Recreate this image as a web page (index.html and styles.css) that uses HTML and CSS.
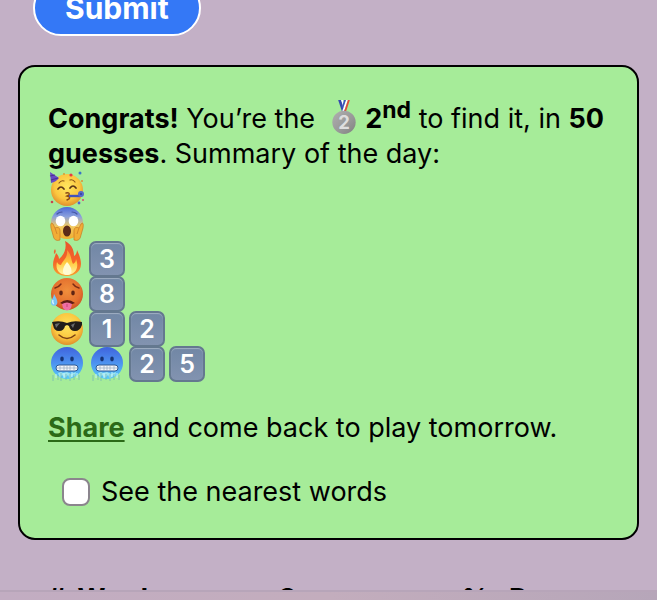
FILE: index.html
```html
<!DOCTYPE html>
<html lang="en">
<head>
    <meta charset="UTF-8">
    <meta name="viewport" content="width=device-width, initial-scale=1.0">
    <title>Word of the day</title>
    <link rel="stylesheet" href="styles.css">
</head>
<body>

    <!-- Emoji shapes, reused below -->
    <svg class="defs" aria-hidden="true">
        <defs>
            <radialGradient id="yellow" cx="50%" cy="40%" r="60%">
                <stop offset="0" stop-color="#ffe65f"/>
                <stop offset="0.65" stop-color="#fbc740"/>
                <stop offset="1" stop-color="#e08f2c"/>
            </radialGradient>
            <radialGradient id="orange" cx="50%" cy="40%" r="60%">
                <stop offset="0" stop-color="#f08f3c"/>
                <stop offset="0.7" stop-color="#e4702e"/>
                <stop offset="1" stop-color="#c95224"/>
            </radialGradient>
            <linearGradient id="scare" x1="0" y1="0" x2="0" y2="1">
                <stop offset="0" stop-color="#4a69d8"/>
                <stop offset="0.3" stop-color="#8ba1dc"/>
                <stop offset="0.6" stop-color="#f2ca62"/>
                <stop offset="1" stop-color="#f0ae2e"/>
            </linearGradient>
            <linearGradient id="ice" x1="0" y1="0" x2="0" y2="1">
                <stop offset="0" stop-color="#3f63dd"/>
                <stop offset="0.5" stop-color="#4d92f0"/>
                <stop offset="1" stop-color="#58cdf8"/>
            </linearGradient>
            <linearGradient id="flame" x1="0" y1="0" x2="0" y2="1">
                <stop offset="0" stop-color="#e9532b"/>
                <stop offset="0.6" stop-color="#f4652a"/>
                <stop offset="1" stop-color="#f9a02c"/>
            </linearGradient>
            <linearGradient id="flame-in" x1="0" y1="0" x2="0" y2="1">
                <stop offset="0" stop-color="#fb8a35"/>
                <stop offset="0.5" stop-color="#ffcb3f"/>
                <stop offset="1" stop-color="#fff6a8"/>
            </linearGradient>
            <linearGradient id="silver" x1="0" y1="0" x2="1" y2="1">
                <stop offset="0" stop-color="#b0b0b0"/>
                <stop offset="0.6" stop-color="#979797"/>
                <stop offset="1" stop-color="#808080"/>
            </linearGradient>

            <symbol id="party" viewBox="0 0 36 36">
                <circle cx="18" cy="19" r="16" fill="url(#yellow)"/>
                <path d="M1 1 L10 7 Q7 11 2 12 Z" fill="#6749c4"/>
                <path d="M1 5 L6 4 M2 9 L9 7" stroke="#4b3090" stroke-width="1.2"/>
                <path d="M10 12 Q12 9 15 10 M21 9 Q24 8 26 11" fill="none" stroke="#8c5619" stroke-width="1.2" stroke-linecap="round"/>
                <path d="M9 18 Q12 14 15 18 M21 17 Q24 13 27 17" fill="none" stroke="#5c3517" stroke-width="1.7" stroke-linecap="round"/>
                <path d="M17 22 Q21 21 20 24 L18 25 Q22 26 20 28 L18 29" fill="none" stroke="#894817" stroke-width="1.4" stroke-linecap="round"/>
                <path d="M20 25 L31 25" stroke="#4352bb" stroke-width="2.4"/>
                <circle cx="32" cy="23" r="3" fill="#5567cc"/>
                <circle cx="32" cy="23" r="1" fill="#354294"/>
                <circle cx="22" cy="4" r="1.6" fill="#e73c41"/>
                <circle cx="31" cy="2" r="1.5" fill="#3974c8"/>
                <circle cx="33" cy="10" r="1" fill="#dd9036"/>
                <circle cx="3" cy="31" r="1.3" fill="#c8454f"/>
                <circle cx="30" cy="32" r="1.4" fill="#5261cf"/>
                <circle cx="34" cy="29" r="1" fill="#d9466b"/>
                <circle cx="15" cy="3" r="1" fill="#d79b36"/>
            </symbol>

            <symbol id="scream" viewBox="0 0 36 36">
                <circle cx="18" cy="17" r="16" fill="url(#scare)"/>
                <path d="M8 8 Q10 6 13 6 M23 6 Q26 6 28 8" fill="none" stroke="#4657a3" stroke-width="1.2" stroke-linecap="round"/>
                <ellipse cx="11.5" cy="15" rx="4.8" ry="5.2" fill="#fff"/>
                <ellipse cx="24.5" cy="15" rx="4.8" ry="5.2" fill="#fff"/>
                <ellipse cx="18" cy="25" rx="4" ry="5.5" fill="#5b2a18"/>
                <path d="M2 22 Q1 15 4 18 L6 22 Q10 20 11 24 L11 34 Q5 36 4 29 Z" fill="#f2ad36" stroke="#c87824" stroke-width="0.7"/>
                <path d="M34 22 Q35 15 32 18 L30 22 Q26 20 25 24 L25 34 Q31 36 32 29 Z" fill="#f2ad36" stroke="#c87824" stroke-width="0.7"/>
                <path d="M6 22 L8 28 M30 22 L28 28" stroke="#c87824" stroke-width="0.7"/>
            </symbol>

            <symbol id="fire" viewBox="0 0 36 36">
                <path d="M16 0 C22 3 25 8 25 15 C27 14 28 11 28 9 C30 13 32 18 32 23 C32 31 25 35 18 35 C10 35 4 31 4 24 C4 19 6 16 7 12 C9 14 10 16 10 18 C15 14 18 7 16 0 Z" fill="url(#flame)"/>
                <path d="M6 8 Q4 10 5 13 Q8 11 6 8 Z" fill="#ef6731"/>
                <path d="M18 9 C23 14 22 20 24 23 C26 22 27 20 27 18 C31 28 25 34 18 34 C10 34 6 28 8 21 C9 23 10 24 12 24 C14 19 19 17 18 9 Z" fill="url(#flame-in)"/>
                <path d="M18 21 C23 26 25 34 18 34 C12 34 13 27 18 21 Z" fill="#fffbd2"/>
            </symbol>

            <symbol id="hot" viewBox="0 0 36 36">
                <circle cx="18" cy="18" r="16" fill="url(#orange)"/>
                <path d="M6 12 Q10 11 12 8 M24 8 Q26 11 30 12" fill="none" stroke="#7b2c15" stroke-width="1.4" stroke-linecap="round"/>
                <ellipse cx="12" cy="17" rx="1.8" ry="2.4" fill="#5f2413"/>
                <ellipse cx="24" cy="17" rx="1.8" ry="2.4" fill="#5f2413"/>
                <path d="M11 27 Q18 21 26 27 Q18 31 11 27 Z" fill="#5c1b16"/>
                <path d="M13 28 Q18 25 23 28 L22 32 Q18 37 14 32 Z" fill="#ef6fa4"/>
                <path d="M18 28 L18 31" stroke="#c84278" stroke-width="1"/>
                <path d="M5 18 C8 23 9 26 8 28 C7 31 1 30 2 26 C2 24 5 21 5 18 Z" fill="#78c5f5"/>
                <path d="M4 24 Q3 27 5 28" fill="none" stroke="#d9f2ff" stroke-width="1.3"/>
            </symbol>

            <symbol id="cool" viewBox="0 0 36 36">
                <circle cx="18" cy="18" r="16" fill="url(#yellow)"/>
                <path d="M3 11 Q11 9 18 12 Q25 9 33 11 L33 14 Q31 20 26 20 Q21 20 20 15 L18 14 L16 15 Q15 20 10 20 Q5 20 4 14 Z" fill="#201e1c"/>
                <path d="M6 13 L11 12 L7 17 Z M22 14 L26 12 L24 17 Z" fill="#696b6d"/>
                <path d="M10 24 Q18 31 26 24" fill="none" stroke="#7c4215" stroke-width="1.6" stroke-linecap="round"/>
            </symbol>

            <symbol id="cold" viewBox="0 0 36 36">
                <circle cx="18" cy="17" r="16" fill="url(#ice)"/>
                <ellipse cx="13" cy="13" rx="1.8" ry="2.4" fill="#173476"/>
                <ellipse cx="23" cy="13" rx="1.8" ry="2.4" fill="#173476"/>
                <rect x="7" y="19" width="22" height="6" rx="3" fill="#f4f7fb" stroke="#2f5693" stroke-width="1"/>
                <path d="M8 22 H28 M11 19 V25 M15 19 V25 M18 19 V25 M21 19 V25 M25 19 V25" stroke="#92a6bd" stroke-width="0.7"/>
                <path d="M9 27 L12 26 L14 27 L18 26 L22 28 L27 26 L26 31 L24 29 L21 33 L19 29 L16 32 L13 29 L11 32 Z" fill="#9ee4ef"/>
                <path d="M4 29 V35 M9 29 V34 M12 27 V35 M17 28 V34 M21 28 V35 M25 28 V34 M30 29 V34" stroke="#77b9b5" stroke-width="0.8"/>
                <path d="M7 28 V32 M15 27 V32 M23 26 V31 M28 27 V32" stroke="#c5f4fb" stroke-width="1"/>
            </symbol>

            <symbol id="medal" viewBox="0 0 36 36">
                <path d="M12 0 L15 0 L20 12 L16 12 Z" fill="#3647b0"/>
                <path d="M15 0 L17 0 L19 7 L18 10 Z" fill="#fff"/>
                <path d="M22 0 L20 0 L16 12 L18 12 Z" fill="#fff"/>
                <path d="M18 0 L20 0 L17 9 L16 7 Z" fill="#3d55bc"/>
                <path d="M22 0 L24 0 L20 12 L18 12 Z" fill="#e24d3a"/>
                <circle cx="18" cy="23" r="12" fill="url(#silver)"/>
                <text x="18" y="30" class="medal-number">2</text>
            </symbol>
        </defs>
    </svg>

    <main>
        <form id="guessForm">
            <button type="button" class="submit">Submit</button>
        </form>

        <section class="card">
            <p><b>Congrats!</b> You’re the <svg class="emoji medal" role="img" aria-label="Second place"><use href="#medal"/></svg> <b>2<sup>nd</sup></b> to find it, in <b>50 guesses</b>. Summary of the day:</p>

            <div class="summary">
                <div class="row"><svg class="emoji"><use href="#party"/></svg></div>
                <div class="row"><svg class="emoji"><use href="#scream"/></svg></div>
                <div class="row"><svg class="emoji"><use href="#fire"/></svg><span class="key">3</span></div>
                <div class="row"><svg class="emoji"><use href="#hot"/></svg><span class="key">8</span></div>
                <div class="row"><svg class="emoji"><use href="#cool"/></svg><span class="key">1</span><span class="key">2</span></div>
                <div class="row"><svg class="emoji"><use href="#cold"/></svg><svg class="emoji"><use href="#cold"/></svg><span class="key">2</span><span class="key">5</span></div>
            </div>

            <p class="share"><a href="#">Share</a> and come back to play tomorrow.</p>

            <div class="option">
                <input type="checkbox" id="nearest">
                <label for="nearest">See the nearest words</label>
            </div>
        </section>

        <table class="guesses">
            <thead>
                <tr>
                    <th class="number">#</th>
                    <th class="word">Word</th>
                    <th class="score">Score</th>
                    <th class="rank">‰</th>
                    <th>Progress</th>
                </tr>
            </thead>
        </table>
    </main>

    <div class="toolbar"></div>

</body>
</html>
```

FILE: styles.css
```css
html {
    height: 100%;
}

body {
    font-family: Inter, "Liberation Sans", sans-serif;
    font-size: 27px;
    line-height: 35px;
    margin: 0;
    height: 100%;
    overflow: hidden;
    background-color: #c3b0c6;
    color: #000;
    display: flex;
    flex-direction: column;
}

main {
    flex: 1;
    min-height: 0;
    overflow: hidden;
    padding: 0 18px;
}

p {
    margin: 0;
}

.defs {
    position: absolute;
    width: 0;
    height: 0;
}

#guessForm {
    margin: -20px 15px 29px;
}

.submit {
    display: block;
    height: 56px;
    padding: 0 30px;
    font: bold 30px Inter, "Liberation Sans", sans-serif;
    color: #fff;
    background-color: #3478f6;
    border: 2px solid #fff;
    border-radius: 28px;
    cursor: pointer;
}

.card {
    background-color: #a6ec99;
    border: 2px solid #000;
    border-radius: 17px;
    padding: 33px 24px 29px 28px;
}

sup {
    font-size: 23px;
    line-height: 0;
}

.emoji {
    width: 36px;
    height: 36px;
    flex: none;
}

.medal {
    height: 35px;
    margin: 0 -4px 0 3px;
    vertical-align: -7px;
}

.medal-number {
    font-size: 19px;
    font-weight: bold;
    text-anchor: middle;
    fill: #dedede;
}

.row {
    display: flex;
    gap: 4px;
    height: 35px;
    padding-left: 1px;
}

.key {
    width: 36px;
    height: 36px;
    flex: none;
    box-sizing: border-box;
    border: 2px solid #64788f;
    border-radius: 7px;
    background: linear-gradient(#7187a5, #8293b0);
    box-shadow: inset 0 1px 1px #a0b0c4;
    color: #fff;
    font-size: 25px;
    font-weight: 600;
    line-height: 32px;
    text-align: center;
}

.share {
    margin: 29px 0;
}

.share a {
    color: #2b6a17;
    font-weight: bold;
    text-decoration-thickness: 2px;
    text-underline-offset: 3px;
}

.option {
    display: flex;
    align-items: center;
    gap: 11px;
    padding-left: 14px;
}

.option input {
    appearance: none;
    width: 28px;
    height: 28px;
    margin: 0;
    background-color: #fff;
    border: 2px solid #8b858d;
    border-radius: 8px;
}

.guesses {
    width: 100%;
    margin-top: 41px;
    padding-left: 30px;
    border-spacing: 0;
    table-layout: fixed;
}

.guesses th {
    padding: 0;
    text-align: left;
}

.guesses .number {
    width: 5%;
}

.guesses .word {
    width: 34%;
}

.guesses .score {
    width: 31%;
}

.guesses .rank {
    width: 8%;
}

.toolbar {
    height: 8px;
    flex: none;
    border-top: 2px solid #b7a5b9;
    background: linear-gradient(to right, #c2adc2, #c3adbd 50%, #b6a6b9);
}
```
